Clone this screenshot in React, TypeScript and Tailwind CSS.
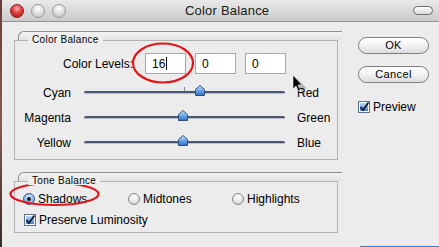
import React from "react";

const font = { fontFamily: '"Liberation Sans", Arial, sans-serif' };

const Light = ({ red }: { red?: boolean }) => (
  <div
    className={
      red
        ? "w-[14px] h-[14px] rounded-full border border-[#8a1f1f] bg-[radial-gradient(circle_at_50%_30%,#ffb0b0_0%,#e03a3a_45%,#a51414_100%)]"
        : "w-[14px] h-[14px] rounded-full border border-[#9a9a9a] bg-[radial-gradient(circle_at_50%_30%,#ffffff_0%,#dedede_50%,#b8b8b8_100%)]"
    }
  />
);

const GroupHeader = ({ label }: { label: string }) => (
  <div className="ml-[4px] w-[324px] h-[9px] rounded-tl-[6px] border-t border-l border-[#8e8e8e] bg-gradient-to-b from-[#f4f4f4] to-[#e2e2e2] flex">
    <span className="relative z-10 ml-[9px] mt-[3px] h-[9px] px-[4px] text-[10px] leading-[9px] tracking-[0.3px] text-black bg-[#efefef]">
      {label}
    </span>
  </div>
);

const Thumb = () => (
  <svg width="10" height="11" viewBox="0 0 10 11">
    <defs>
      <linearGradient id="th" x1="0" y1="0" x2="0" y2="1">
        <stop offset="0" stopColor="#d6e8ff" />
        <stop offset="0.5" stopColor="#6ea7ec" />
        <stop offset="1" stopColor="#2f6cc4" />
      </linearGradient>
    </defs>
    <path d="M5 0.5 L9.5 4.5 L9.5 10.5 L0.5 10.5 L0.5 4.5 Z" fill="url(#th)" stroke="#2d4e80" strokeWidth="1" />
  </svg>
);

const SliderRow = ({ left, right, pos }: { left: string; right: string; pos: string }) => (
  <div className="flex items-center h-[25px]">
    <span className="w-[56px] text-right text-[12px]">{left}</span>
    <div className="relative ml-[13px] w-[201px] h-[3px] rounded-full bg-[#4b5670] border-b border-[#b9bfcc]">
      <div className="absolute left-[100px] -top-[4px] w-px h-[4px] bg-[#8a8a8a]" />
      <div className={"absolute -top-[6px] " + pos}>
        <Thumb />
      </div>
    </div>
    <span className="ml-[12px] text-[12px]">{right}</span>
  </div>
);

const Radio = ({ on }: { on?: boolean }) => (
  <div
    className={
      on
        ? "w-[12px] h-[12px] rounded-full border border-[#3f5f8f] bg-[radial-gradient(circle_at_50%_35%,#e6f1ff_0%,#8bb9f0_55%,#4a82cf_100%)] flex items-center justify-center"
        : "w-[12px] h-[12px] rounded-full border border-[#8a8a8a] bg-[radial-gradient(circle_at_50%_35%,#ffffff_0%,#e8e8e8_55%,#b9b9b9_100%)]"
    }
  >
    {on && <div className="w-[4px] h-[4px] rounded-full bg-[#1a1a1a]" />}
  </div>
);

const Check = () => (
  <svg width="12" height="12" viewBox="0 0 12 12">
    <defs>
      <linearGradient id="cb" x1="0" y1="0" x2="0" y2="1">
        <stop offset="0" stopColor="#bcd8fb" />
        <stop offset="1" stopColor="#3d7fd6" />
      </linearGradient>
    </defs>
    <rect x="0.5" y="0.5" width="11" height="11" fill="#ffffff" stroke="#5b6f8f" />
    <rect x="2" y="2" width="8" height="8" fill="url(#cb)" />
    <path d="M2.5 6 L5 9 L10.5 1.5" fill="none" stroke="#111827" strokeWidth="1.8" />
  </svg>
);

const Field = ({ value, caret }: { value: string; caret?: boolean }) => (
  <div className="w-[41px] h-[21px] border border-[#a9a9a9] bg-white flex items-center pl-[6px] text-[12px]">
    {value}
    {caret && <span className="ml-px w-px h-[13px] bg-black" />}
  </div>
);

const Pill = ({ label }: { label: string }) => (
  <div className="w-[71px] h-[17px] rounded-full border border-[#7d7d7d] bg-gradient-to-b from-[#ffffff] via-[#f3f3f3] to-[#dcdcdc] flex items-center justify-center text-[11px] tracking-[0.4px]">
    {label}
  </div>
);

export default function App() {
  return (
    <div className="w-[439px] h-[247px] relative overflow-hidden bg-[#ececec] flex text-black" style={font}>
      <div className="w-[2px] bg-gradient-to-b from-[#6b3a3a] via-[#8a5a55] to-[#3a2a2a]" />
      <div className="flex-1 flex flex-col">
        <div className="h-[22px] border-b border-[#939393] bg-gradient-to-b from-[#e9e9e9] to-[#cbcbcb] flex items-center">
          <div className="ml-[8px] flex gap-[7px]">
            <Light red />
            <Light />
            <Light />
          </div>
          <span className="ml-[119px] text-[13px] tracking-[0.2px] text-[#1a1a1a]">Color Balance</span>
          <div className="ml-auto mr-[6px] w-[20px] h-[9px] rounded-full border border-[#6c6c6c] bg-gradient-to-b from-white to-[#dcdcdc]" />
        </div>

        <div className="flex pt-[9px] pl-[12px]">
          <div className="w-[328px] flex flex-col">
            <GroupHeader label="Color Balance" />
            <div className="w-[324px] h-[120px] border border-[#b3b3b3] flex flex-col pt-[12px]">
              <div className="flex items-center">
                <span className="w-[118px] text-right text-[12px]">Color Levels:</span>
                <div className="ml-[12px] flex gap-[9px]">
                  <Field value="16" caret />
                  <Field value="0" />
                  <Field value="0" />
                </div>
              </div>
              <div className="mt-[6px] flex flex-col">
                <SliderRow left="Cyan" right="Red" pos="left-[111px]" />
                <SliderRow left="Magenta" right="Green" pos="left-[94px]" />
                <SliderRow left="Yellow" right="Blue" pos="left-[94px]" />
              </div>
            </div>

            <div className="mt-[12px]">
              <GroupHeader label="Tone Balance" />
            </div>
            <div className="w-[324px] h-[52px] border border-[#b3b3b3] flex flex-col pt-[8px] pl-[8px]">
              <div className="flex items-center text-[12px]">
                <div className="w-[105px] flex items-center gap-[3px]">
                  <Radio on />
                  <span>Shadows</span>
                </div>
                <div className="w-[104px] flex items-center gap-[3px]">
                  <Radio />
                  <span>Midtones</span>
                </div>
                <div className="flex items-center gap-[3px]">
                  <Radio />
                  <span>Highlights</span>
                </div>
              </div>
              <div className="mt-[3px] ml-[1px] flex items-center gap-[3px] text-[12px]">
                <Check />
                <span>Preserve Luminosity</span>
              </div>
            </div>
          </div>

          <div className="ml-[16px] w-[71px] flex flex-col pt-[6px]">
            <Pill label="OK" />
            <div className="mt-[12px]">
              <Pill label="Cancel" />
            </div>
            <div className="mt-[15px] flex items-center gap-[3px] text-[12px]">
              <Check />
              <span>Preview</span>
            </div>
          </div>
        </div>
      </div>

      <div className="absolute left-[360px] right-0 bottom-0 h-px bg-[#3b7bd8]" />

      <svg className="absolute inset-0 pointer-events-none" width="439" height="247">
        <ellipse cx="163" cy="63" rx="30" ry="19.5" fill="none" stroke="#e3141b" strokeWidth="2.2" />
        <ellipse cx="54.5" cy="194" rx="44" ry="11" fill="none" stroke="#e3141b" strokeWidth="2.2" />
        <path d="M296 77 L296 91 L299 88 L301.5 93 L303.5 92 L301 87 L305 87 Z" fill="#000" opacity="0.25" transform="translate(1.5,1.5)" />
        <path d="M293 75 L293 89 L296 86 L298.5 91 L300.5 90 L298 85 L302 85 Z" fill="#000" stroke="#fff" strokeWidth="0.6" />
      </svg>
    </div>
  );
}
